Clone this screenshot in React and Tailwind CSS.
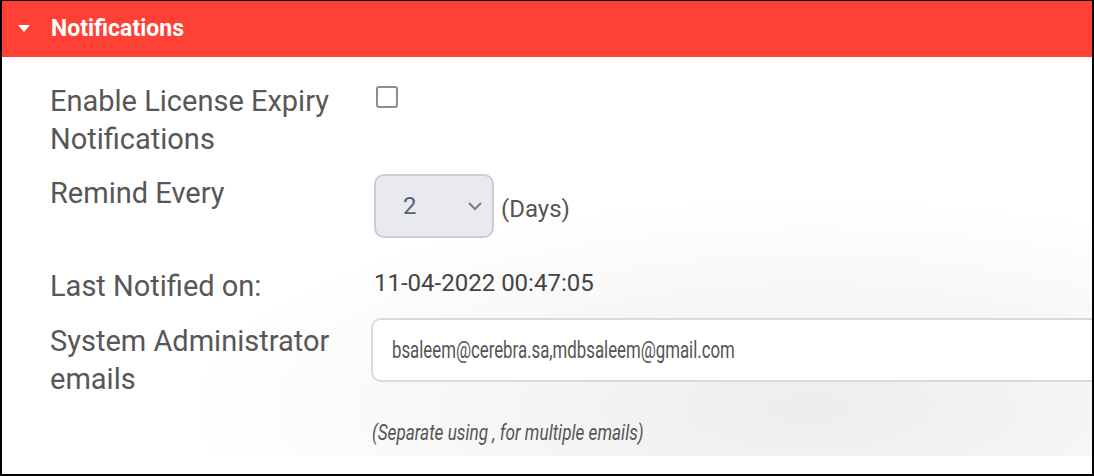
export default function App() {
  return (
    <div className="w-[1094px] h-[476px] border-t border-l-2 border-r-2 border-b-2 border-black bg-white flex flex-col overflow-hidden font-['Roboto',sans-serif]">
      <div className="h-[56px] shrink-0 bg-[#ff4034] flex items-center pl-[16px]">
        <svg width="12" height="8" viewBox="0 0 12 8" className="mt-[-1px]">
          <polygon points="0,0 12,0 6,7" fill="#ffffff" />
        </svg>
        <span className="ml-[21px] text-[23px] font-bold text-white leading-none mt-[-1px]">
          Notifications
        </span>
      </div>
      <div className="h-[399px] shrink-0 overflow-hidden pl-[48px] pt-[25px] bg-[radial-gradient(620px_210px_at_74%_88%,#ededed,#ffffff)]">
        <div className="flex items-start">
          <div className="w-[324px] shrink-0 text-[29px] leading-[38px] text-[#575757]">
            Enable License Expiry
            <br />
            Notifications
          </div>
          <div className="ml-[2px] mt-[4px] w-[22px] h-[22px] border-2 border-[#8c8c92] rounded-[3px] bg-white" />
        </div>

        <div className="flex items-start mt-[16px]">
          <div className="w-[324px] shrink-0 text-[29px] leading-[38px] text-[#575757]">
            Remind Every
          </div>
          <div className="w-[120px] h-[64px] rounded-[10px] border-2 border-[#c9cdd4] bg-[#e9eaef] flex items-center justify-between pl-[27px] pr-[9px]">
            <span className="text-[24px] leading-[24px] text-[#5a6272]">2</span>
            <svg width="16" height="10" viewBox="0 0 16 10">
              <polyline points="2,2 8,8 14,2" fill="none" stroke="#7a7f88" strokeWidth="2" />
            </svg>
          </div>
          <div className="ml-[7px] mt-[23px] text-[24px] leading-[24px] text-[#555555]">(Days)</div>
        </div>

        <div className="flex items-start mt-[29px]">
          <div className="w-[324px] shrink-0 text-[29px] leading-[38px] text-[#575757]">
            Last Notified on:
          </div>
          <div className="mt-[4px] text-[24px] leading-[24px] text-[#444444]">11-04-2022 00:47:05</div>
        </div>

        <div className="flex items-start mt-[13px]">
          <div className="w-[324px] shrink-0 mt-[4px] text-[29px] leading-[38px] text-[#575757]">
            System Administrator
            <br />
            emails
          </div>
          <div className="ml-[-3px] w-[760px] shrink-0 h-[64px] rounded-[10px] border-2 border-[#d6dbe1] bg-white flex items-center pl-[19px]">
            <span className="inline-block origin-left scale-x-[0.7] text-[24px] leading-[24px] text-[#555555] whitespace-nowrap">
              bsaleem@cerebra.sa,mdbsaleem@gmail.com
            </span>
          </div>
        </div>

        <div className="pl-[322px] mt-[21px]">
          <span className="inline-block origin-left scale-x-[0.78] italic text-[22px] leading-[28px] text-[#555555] whitespace-nowrap">
            (Separate using , for multiple emails)
          </span>
        </div>
      </div>
      <div className="flex-1 bg-white" />
    </div>
  );
}
